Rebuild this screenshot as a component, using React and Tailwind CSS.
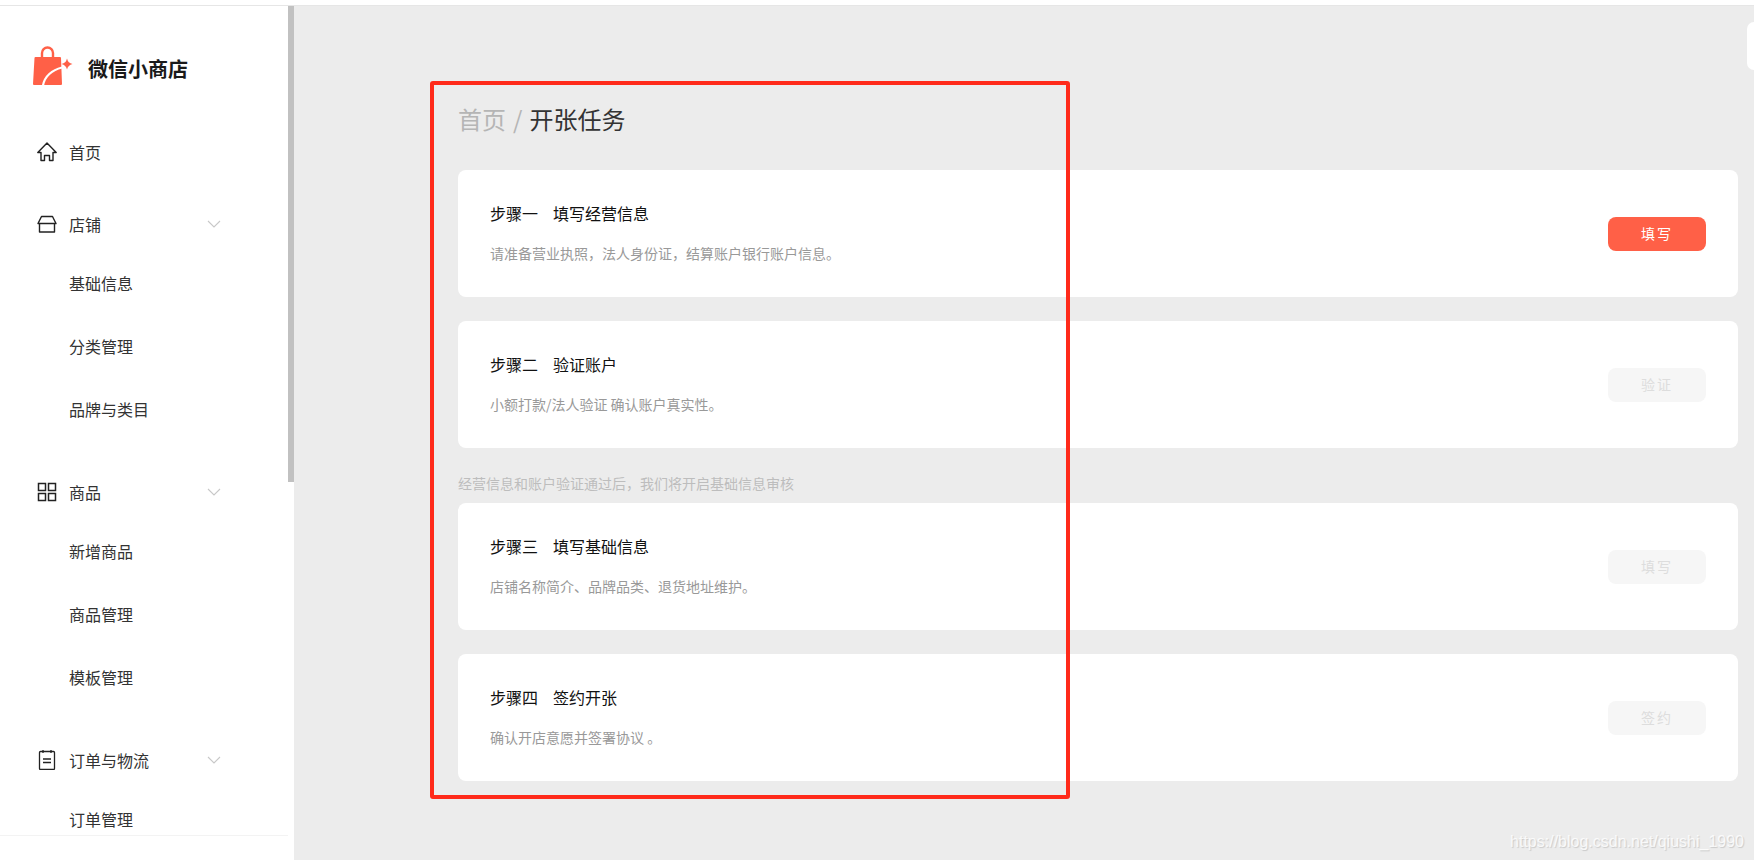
import React from "react";

/* ---------------------------- Icons ---------------------------- */
const LogoIcon = () => (
  <svg width="41" height="40" viewBox="0 0 41 40" fill="none">
    <path d="M10 12V7a5.5 5.5 0 0 1 11 0v5" stroke="#ff6047" strokeWidth="2.4" />
    <path d="M3.5 11H28a1 1 0 0 1 1 1l1 26a1 1 0 0 1-1 1H2a1 1 0 0 1-1-1l1.500-26a1 1 0 0 1 1-1z" fill="#ff6047" />
    <path d="M11 39.500C12.500 30.500 20 24 30 21.500" stroke="#fff" strokeWidth="2.200" />
    <path d="M35 12.500Q36 17 40.500 18 36 19 35 23.500 34 19 29.500 18 34 17 35 12.500z" fill="#ff6047" />
  </svg>
);

const HomeIcon = () => (
  <svg width="20" height="20" viewBox="0 0 20 20" fill="none" stroke="#222" strokeWidth="1.400" strokeLinejoin="round">
    <path d="M10 1L.8 10.500H4V18.500H7.500V13.500H12.500V18.500H16V10.500H19.200z" />
  </svg>
);

const StoreIcon = () => (
  <svg width="20" height="20" viewBox="0 0 20 20" fill="none" stroke="#222" strokeWidth="1.400" strokeLinejoin="round">
    <path d="M4.500 2.500H15.500L19 9.500H1z" />
    <path d="M2.500 9.500V18H17.500V9.500" />
  </svg>
);

const GridIcon = () => (
  <svg width="20" height="20" viewBox="0 0 20 20" fill="none" stroke="#222" strokeWidth="1.500">
    <rect x="1.500" y="1.500" width="7" height="7" />
    <rect x="11.500" y="1.500" width="7" height="7" />
    <rect x="1.500" y="11.500" width="7" height="7" />
    <rect x="11.500" y="11.500" width="7" height="7" />
  </svg>
);

const OrderIcon = () => (
  <svg width="20" height="20" viewBox="0 0 20 20" fill="none" stroke="#222" strokeWidth="1.300" strokeLinejoin="round">
    <rect x="2.500" y="1.500" width="15" height="18" rx="1" />
    <path d="M6 0V3M14 0V3M6 9H14M6 12.500H14" />
  </svg>
);

const Chevron = () => (
  <svg width="14" height="8" viewBox="0 0 14 8" fill="none" stroke="#c8c8c8" strokeWidth="1.100" className="mb-[1px]">
    <path d="M1 1l6 6 6-6" />
  </svg>
);

/* ---------------------------- Sidebar ---------------------------- */
const menu = [
  { label: "首页", icon: <HomeIcon />, gap: "" },
  { label: "店铺", icon: <StoreIcon />, gap: "", children: ["基础信息", "分类管理", "品牌与类目"] },
  { label: "商品", icon: <GridIcon />, gap: "mt-[7px]", children: ["新增商品", "商品管理", "模板管理"] },
  { label: "订单与物流", icon: <OrderIcon />, gap: "mt-[7px]", children: ["订单管理"] },
];

const Sidebar = () => (
  <aside className="flex w-[294px] shrink-0 bg-white">
    <div className="flex w-[288px] flex-col">
      <div className="flex h-[119px] shrink-0 items-start pl-8 pt-10">
        <LogoIcon />
        <span className="ml-[15px] mt-[3px] text-[20px] font-bold leading-[40px] text-[#1a1a1a]">微信小商店</span>
      </div>
      <nav className="flex flex-1 flex-col gap-[18px] overflow-hidden">
        {menu.map((item) => (
          <div key={item.label} className={item.gap}>
            <div className="flex h-[54px] items-center pl-[37px] pr-[67px] text-[16px] text-[#333]">
              {item.icon}
              <span className="ml-3 flex-1">{item.label}</span>
              {item.children && <Chevron />}
            </div>
            {item.children?.map((sub) => (
              <div key={sub} className="flex h-[63px] shrink-0 items-center pl-[69px] text-[16px] text-[#333]">
                {sub}
              </div>
            ))}
          </div>
        ))}
      </nav>
      <div className="h-[25px] shrink-0 border-t border-[#f3f3f3]" />
    </div>
    <div className="w-[6px]">
      <div className="h-[476px] bg-[#c1c1c1]" />
    </div>
  </aside>
);

/* ---------------------------- Step Card ---------------------------- */
const StepCard = ({ step, title, desc, action, active }) => (
  <div className="flex h-[127px] items-center justify-between rounded-lg bg-white pl-8 pr-8">
    <div className="mb-[4px]">
      <h3 className="flex text-[16px] leading-6 text-[#111]">
        <span className="mr-[15px]">{step}</span>
        <span>{title}</span>
      </h3>
      <p className="mt-[18px] text-[14px] leading-5 text-[#999]">{desc}</p>
    </div>
    <button
      className={
        active
          ? "h-[34px] w-[98px] rounded-lg bg-[#ff6047] text-[14px] tracking-[2px] text-white"
          : "h-[34px] w-[98px] rounded-lg bg-[#f6f6f6] text-[14px] tracking-[2px] text-[#ddd]"
      }
    >
      {action}
    </button>
  </div>
);

/* -------------------------- Component -------------------------- */
export default function App() {
  return (
    <div className="relative flex h-screen w-full flex-col overflow-hidden bg-[#ececec] font-['Noto_Sans_CJK_SC','Noto_Sans',sans-serif]">
      <div className="h-[6px] shrink-0 border-b border-[#e6e6e6] bg-white" />
      <div className="flex min-h-0 flex-1">
        <Sidebar />
        <main className="flex-1 pl-[164px] pr-4 pt-[96px]">
          <h1 className="mb-[34px] flex text-[24px] leading-[34px] text-[#333]">
            <span className="text-[#b5b5b5]">首页</span>
            <span className="ml-[7px] mr-[7px] text-[#b5b5b5]">/</span>
            <span>开张任务</span>
          </h1>
          <div className="flex flex-col gap-6">
            <StepCard step="步骤一" title="填写经营信息" desc="请准备营业执照，法人身份证，结算账户银行账户信息。" action="填写" active />
            <StepCard step="步骤二" title="验证账户" desc="小额打款/法人验证 确认账户真实性。" action="验证" />
          </div>
          <p className="mb-[10px] mt-[25px] text-[14px] leading-5 text-[#bdbdbd]">经营信息和账户验证通过后，我们将开启基础信息审核</p>
          <div className="flex flex-col gap-6">
            <StepCard step="步骤三" title="填写基础信息" desc="店铺名称简介、品牌品类、退货地址维护。" action="填写" />
            <StepCard step="步骤四" title="签约开张" desc="确认开店意愿并签署协议 。" action="签约" />
          </div>
        </main>
      </div>

      {/* panel peeking in from the right edge */}
      <div className="absolute right-0 top-[22px] h-[48px] w-[7px] rounded-l-lg bg-white" />
      {/* red annotation frame */}
      <div className="pointer-events-none absolute left-[430px] top-[81px] h-[718px] w-[640px] rounded-[3px] border-4 border-[#ff2a1a]" />
      {/* image watermark */}
      <div className="absolute bottom-[8px] right-[10px] font-['Liberation_Sans',sans-serif] text-[16px] leading-5 text-white/80 [text-shadow:1px_1px_1px_rgba(0,0,0,0.15)]">
        https://blog.csdn.net/qiushi_1990
      </div>
    </div>
  );
}
